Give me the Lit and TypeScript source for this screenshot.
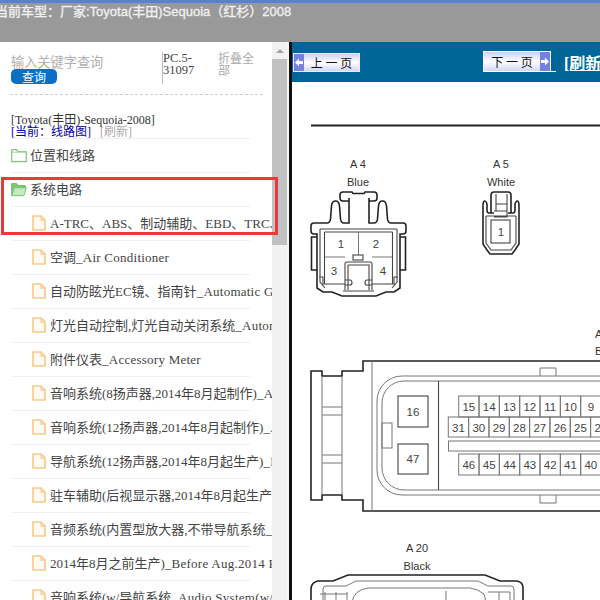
import { LitElement, html, css, svg } from "lit";
import { customElement } from "lit/decorators.js";

const files = [
  "A-TRC、ABS、制动辅助、EBD、TRC、VSC_Anti-Lock Brake",
  "空调_Air Conditioner",
  "自动防眩光EC镜、指南针_Automatic Glare-Resistant",
  "灯光自动控制,灯光自动关闭系统_Automatic Light Control",
  "附件仪表_Accessory Meter",
  "音响系统(8扬声器,2014年8月起制作)_Audio System",
  "音响系统(12扬声器,2014年8月起制作)_Audio System",
  "导航系统(12扬声器,2014年8月起生产)_Navigation",
  "驻车辅助(后视显示器,2014年8月起生产)_Parking",
  "音频系统(内置型放大器,不带导航系统_Audio System",
  "2014年8月之前生产)_Before Aug.2014 Production",
  "音响系统(w/导航系统_Audio System(w/ Navigation)",
];

const pitch = 20.33;
const pinRow = (x0: number, y: number, h: number, nums: number[]) =>
  nums.map((n, i) => {
    const x = x0 + i * pitch;
    return svg`<rect class="thin" x=${x} y=${y} width=${pitch} height=${h}></rect>
      <text class="num" x=${x + pitch / 2} y=${y + h / 2 + 4.5}>${n}</text>`;
  });

const folder = (open: boolean) => html`<svg class="folder" viewBox="0 0 16 15">
  ${open
    ? svg`<path d="M.7 13.6V1.6h5l1.2 2h7.400v2.400H4z" fill="#7cc873" stroke="#74b56c"></path>
          <path d="M.7 13.600 3.400 5.800h12l-2.400 7.800z" fill="#c4eabd" stroke="#82c27a"></path>`
    : svg`<path d="M.7 13.6V1.6h5l1.2 2h8.400v10z" fill="#fdfffc" stroke="#86c47e" stroke-width="1.2"></path>
          <path d="M.7 4.2h14.6" fill="none" stroke="#a9d8a2"></path>`}
</svg>`;

const fileIcon = html`<svg class="file" viewBox="0 0 14 16">
  <path d="M1 1h8l4 4.2V15H1z" fill="#fffaf2" stroke="#f5cb92" stroke-width="1.7" stroke-linejoin="round"></path>
  <path d="M9 1v4.2h4" fill="none" stroke="#f5cb92" stroke-width="1.2"></path>
</svg>`;

const label = (f: string) => {
  const cut = f.indexOf("_");
  return html`<span class="name">${f.slice(0, cut)}<span class="en">${f.slice(cut)}</span></span>`;
};

@customElement("app-root")
export class AppRoot extends LitElement {
  static styles = css`
    :host {
      display: block;
      width: 600px;
      height: 600px;
      overflow: hidden;
      background: #fff;
      font-family: "Liberation Serif", "Noto Sans CJK SC", serif;
      color: #444;
    }
    .page { display: flex; flex-direction: column; height: 600px; }
    .top {
      height: 42px;
      box-sizing: border-box;
      flex: none;
      background: #999;
      border-top: 3px solid #5b80d2;
      overflow: hidden;
    }
    .title {
      margin: 0 0 0 -5px;
      font: 13px/17px "Liberation Sans", "Noto Sans CJK SC", sans-serif;
      -webkit-text-stroke: 0.35px #f0f0f0;
      color: #f0f0f0;
      white-space: nowrap;
    }
    .main { flex: 1; display: flex; min-height: 0; }
    aside { width: 289px; flex: none; display: flex; background: #fff; }
    .panel { width: 272px; flex: none; overflow: hidden; box-sizing: border-box; padding-left: 11px; }
    .tools { display: flex; height: 42px; padding-top: 10px; }
    .search { width: 151px; flex: none; }
    .placeholder { font: 13.2px/20px "Noto Sans CJK SC", sans-serif; color: #b0b0b0; white-space: nowrap; height: 17px; }
    .go {
      width: 46px; height: 15px;
      background: #0b6fc6; color: #fff; border-radius: 5px;
      font: 12px/15px "Noto Sans CJK SC", sans-serif; text-align: center;
    }
    .code {
      width: 55px; flex: none; height: 32px;
      border-left: 1px solid #bbb;
      font-size: 12.5px; line-height: 12px; color: #444;
    }
    .fold { width: 37px; font: 12px/12px "Noto Sans CJK SC", sans-serif; color: #aaa; }
    .dash { width: 253px; border-top: 1px dashed #ccc; height: 0; margin-left: -1px; }
    .crumb { font-size: 12px; line-height: 12px; padding-top: 19px; white-space: nowrap; color: #333; }
    .crumb .cur { color: #0000aa; }
    .crumb .ref { color: #aaa; margin-left: 9px; }
    .crumb div { height: 12px; }
    ul { list-style: none; margin: 0; padding: 0; width: 239px; }
    .sep { width: 239px; height: 0; border-top: 1px solid #f0f0f0; }
    li {
      height: 34px; box-sizing: border-box;
      border-bottom: 1px solid #f0f0f0;
      display: flex; align-items: center;
      white-space: nowrap;
      font-size: 13px;
      color: #444;
      padding-bottom: 1px;
    }
    li > span { margin-bottom: 2px; }
    .en { letter-spacing: 0.25px; }
    li.dir { gap: 3px; }
    li.leaf { padding-left: 21px; gap: 4px; }
    .folder { width: 16px; height: 15px; flex: none; }
    .file { width: 14px; height: 16px; flex: none; }
    .bar { width: 15px; flex: none; display: flex; flex-direction: column; background: #f1f1f1; }
    .up { height: 17px; display: flex; align-items: center; justify-content: center; }
    .up i { width: 0; height: 0; border: 4px solid transparent; border-top: 0; border-bottom: 4px solid #a3a3a3; }
    .thumb { height: 186px; background: #c1c1c1; }
    .gap { width: 2px; flex: none; background: #f6f6f6; }
    .view { flex: 1; min-width: 0; border-left: 3px solid #111; display: flex; flex-direction: column; }
    .nav {
      height: 40px; flex: none; background: #006699;
      display: flex; align-items: center; white-space: nowrap; overflow: hidden;
      padding-left: 1px;
    }
    .btn {
      box-sizing: border-box;
      height: 19px; width: 67px; flex: none;
      border: 1px solid #e8ecff;
      background: linear-gradient(#cdd0f2, #ffffff 50%, #d3d6f4);
      display: flex; align-items: center;
      font: 12px/17px "Noto Sans CJK SC", sans-serif; color: #111;
    }
    .btn b {
      width: 10px; height: 100%; flex: none; background: #7480e4;
      display: flex; align-items: center; justify-content: center;
    }
    .btn span { flex: 1; text-align: center; }
    .next { height: 21px; width: 68px; margin-left: 123px; margin-top: -1px; border-color: #fff; }
    .tail { width: 5px; height: 10px; margin-top: 8px; border-bottom: 1px solid #fff; flex: none; }
    .refresh {
      margin-left: 8px; color: #fff; font-weight: 700; font-size: 16px;
      text-decoration: underline;
    }
    .canvas { flex: 1; min-height: 0; display: block; width: 308px; height: 518px; background: #fff; }
    .canvas .thick { fill: none; stroke: #222; stroke-width: 1.6; }
    .canvas .mid { fill: none; stroke: #444; stroke-width: 1.1; }
    .canvas .thin { fill: none; stroke: #777; stroke-width: 1; }
    .canvas text { font-family: "Liberation Sans", sans-serif; font-size: 11px; fill: #333; text-anchor: middle; }
    .canvas text.num { font-size: 11.5px; fill: #444; }
    .canvas text.start { text-anchor: start; }
    .mark {
      position: absolute; left: 1px; top: 177px; width: 277px; height: 58px;
      box-sizing: border-box; border: 3px solid #e83a3a; pointer-events: none;
    }
  `;

  render() {
    return html`<div class="page">
      <div class="top"><p class="title">当前车型：厂家:Toyota(丰田)Sequoia（红杉）2008</p></div>
      <div class="main">
        <aside>
          <div class="panel">
            <div class="tools">
              <div class="search">
                <div class="placeholder">输入关键字查询</div>
                <div class="go">查询</div>
              </div>
              <div class="code">PC.5-31097</div>
              <div class="fold">折叠全部</div>
            </div>
            <div class="dash"></div>
            <div class="crumb">
              <div>[Toyota(丰田)-Sequoia-2008]</div>
              <div><span class="cur">[当前：线路图]</span><span class="ref">[刷新]</span></div>
            </div>
            <div class="sep"></div>
            <ul>
              <li class="dir">${folder(false)}<span>位置和线路</span></li>
              <li class="dir">${folder(true)}<span>系统电路</span></li>
              ${files.map((f) => html`<li class="leaf">${fileIcon}${label(f)}</li>`)}
            </ul>
          </div>
          <div class="bar">
            <div class="up"><i></i></div>
            <div class="thumb"></div>
          </div>
          <div class="gap"></div>
        </aside>
        <div class="view">
          <div class="nav">
            <div class="btn">
              <b><svg width="8" height="9" viewBox="0 0 8 9"><path d="M0 4.500 4 .5v2.400h4v3.200H4v2.400z" fill="#fff"></path></svg></b>
              <span>上 一 页</span>
            </div>
            <div class="btn next">
              <span>下 一 页</span>
              <b><svg width="8" height="9" viewBox="0 0 8 9"><path d="M8 4.500 4 .5v2.400H0v3.200h4v2.400z" fill="#fff"></path></svg></b>
            </div>
            <div class="tail"></div>
            <span class="refresh">[刷新]</span>
          </div>
          ${this.diagram()}
        </div>
      </div>
      <div class="mark"></div>
    </div>`;
  }

  diagram() {
    return html`<svg class="canvas" viewBox="292 82 308 518">
      <path d="M311 125.500H600" stroke="#222" stroke-width="2" fill="none"></path>

      <text x="358" y="168">A 4</text>
      <text x="358" y="186">Blue</text>
      <path class="thick" d="M349 201H343Q340 201 340 198V195Q340 192 343 192H352L353 193.500H364L365 192H374Q377 192 377 195V198Q377 201 374 201H369"></path>
      <path class="thick" d="M349 198V223H344Q341 223 340.500 219L339.500 206Q339 201 335.500 201Q332 201 331.500 206L330.500 219Q330 223 327 223H314Q311 223 311 226V231Q311 234 314 234H317V288L323 292H332L342 296H376L386 292H394L400 288V234H403Q406 234 406 231V226Q406 223 403 223H391Q388 223 387.500 219L386.500 206Q386 201 382.500 201Q379 201 378.500 206L377.500 219Q377 223 374 223H369V198"></path>
      <path class="thick" d="M317 237H311.500V270H317M400 237H405.500V270H400"></path>
      <path class="mid" d="M320 229H397M320 229V282L325 288M397 229V282L392 288M319 277H323V286M398 277H394V286"></path>
      <path class="mid" d="M324.500 232V284H345M392.500 232V284H372M324.500 232H392.500"></path>
      <path class="thin" d="M325 257H345M372 257H392M358.500 232V255"></path>
      <rect class="mid" x="353" y="255" width="10" height="5"></rect>
      <path class="mid" d="M345 290V264Q345 262 347 262H370Q372 262 372 264V290M348 265H369V290M348 265V290M345 280H350Q352 280 352 283Q352 285 350 285H345M372 280H367Q365 280 365 283Q365 285 367 285H372M343 291H374"></path>
      <text class="num" x="341" y="248">1</text>
      <text class="num" x="376" y="248">2</text>
      <text class="num" x="334" y="275">3</text>
      <text class="num" x="383" y="275">4</text>

      <text x="501" y="168">A 5</text>
      <text x="501" y="186">White</text>
      <path class="thick" d="M491 213V195Q491 192 494 192H508Q511 192 511 195V213"></path>
      <path class="thick" d="M494 213H489Q487 213 487 210V204Q486 201 485 201Q483 201 483 205V244L487 250L490 254H512L515 250L519 244V205Q519 201 517 201Q516 201 515 204V210Q515 213 513 213H508"></path>
      <path class="mid" d="M486 216H516M496 194V211M507 194V211M496 204H507M494 211H507V217H494M486 216V243L491 250H511L516 243V216"></path>
      <rect class="mid" x="491" y="220" width="19" height="23"></rect>
      <text class="num" x="501" y="236">1</text>

      <text class="start" x="595" y="338">A 21</text>
      <text class="start" x="595" y="355">Blue</text>

      <path class="thick" d="M600 361H363V371H342V376H322V371H311V500H322V495H342V500H363V511H600"></path>
      <path class="thin" d="M322 376V495M342 376V495M372 361V511M322 407H342M322 415H342M322 455H342M322 463H342"></path>
      <path class="thin" d="M600 376H402A25 25 0 0 0 377 401V470A25 25 0 0 0 402 495H600"></path>
      <path class="thin" d="M600 381H404A22 22 0 0 0 382 403V468A22 22 0 0 0 404 490H600"></path>
      <path class="mid" d="M438.500 381V490"></path>
      <path class="thin" d="M540 376V368H556V376M540 495V503H556V495"></path>
      <rect class="thin" x="382" y="423" width="10" height="25"></rect>
      <rect class="mid" x="398" y="396" width="30" height="31"></rect>
      <text class="num" x="413" y="416">16</text>
      <rect class="mid" x="398" y="444" width="30" height="30"></rect>
      <text class="num" x="413" y="463">47</text>

      ${pinRow(458.7, 396, 21, [15, 14, 13, 12, 11, 10, 9, 8])}
      ${pinRow(448.3, 417, 20, [31, 30, 29, 28, 27, 26, 25, 24])}
      <rect class="thin" x="448.500" y="441" width="160" height="10"></rect>
      ${pinRow(458.7, 454, 21, [46, 45, 44, 43, 42, 41, 40, 39])}

      <text x="417" y="552">A 20</text>
      <text x="417" y="570">Black</text>
      <path class="thick" d="M311 602V588Q312 582 318 581H333L348 575H485L500 581H517Q523 582 523 588V602"></path>
      <path class="thin" d="M323 602V589Q323 586 326 586H346L356 581H478L488 586H511Q514 586 514 589V602"></path>
      <path class="thin" d="M352 602Q354 590 368 588H470Q478 589 484 594L486 602M446 600V591M320 594H347M325 592V602M336 592V602M347 592V602M488 592H510M499 592V602M510 592V602"></path>
    </svg>`;
  }
}
